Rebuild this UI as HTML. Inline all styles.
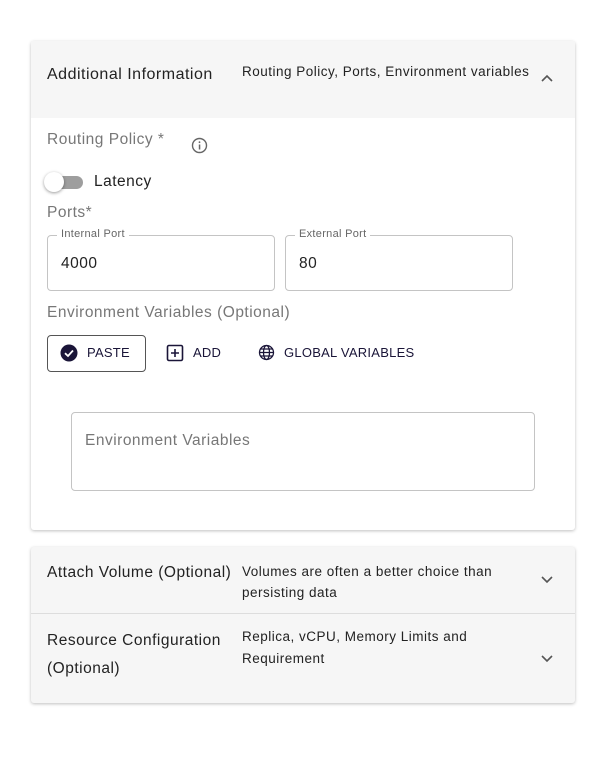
<!DOCTYPE html>
<html><head><style>
body{margin:0;width:604px;height:763px;background:#fff;font-family:"Liberation Sans",sans-serif;position:relative;overflow:hidden;letter-spacing:0.5px}
.a{position:absolute;white-space:nowrap}
.card{position:absolute;left:31px;width:544px;background:#fff;box-shadow:0 1px 3px rgba(0,0,0,.25);border-radius:3px}
.g{color:#777}
.fld{position:absolute;border:1px solid #c4c4c4;border-radius:4px}
.leg{position:absolute;top:-8px;left:9px;background:#fff;padding:0 4px;font-size:11px;color:#666;letter-spacing:0.3px}
.btn{font-size:13px;color:#1a1538;letter-spacing:0.25px}
</style></head><body>
<div class="card" style="top:41px;height:489px">
 <div style="position:absolute;left:0;top:0;width:544px;height:77px;background:#f6f6f6"></div>
</div>
<div class="a" style="left:47px;top:66px;font-size:16px;color:#222">Additional Information</div>
<div class="a" style="left:242px;top:64px;font-size:13.5px;color:#222">Routing Policy, Ports, Environment variables</div>
<svg class="a" style="left:540px;top:73px" width="14" height="10" viewBox="0 0 14 10"><path d="M2 8 L7 3 L12 8" fill="none" stroke="#555" stroke-width="1.6"/></svg>
<div class="a g" style="left:47px;top:131px;font-size:15.5px">Routing Policy *</div>
<svg class="a" style="left:191px;top:137px" width="17" height="17" viewBox="0 0 17 17"><circle cx="8.5" cy="8.5" r="7" fill="none" stroke="#666" stroke-width="1.4"/><rect x="7.8" y="7.5" width="1.5" height="5" fill="#666"/><circle cx="8.5" cy="5.2" r="0.9" fill="#666"/></svg>
<div class="a" style="left:50px;top:176px;width:33px;height:13px;border-radius:7px;background:#9e9e9e"></div>
<div class="a" style="left:44px;top:172px;width:20px;height:20px;border-radius:50%;background:#fff;box-shadow:0 1px 3px rgba(0,0,0,.4)"></div>
<div class="a" style="left:94px;top:173px;font-size:15.5px;color:#222">Latency</div>
<div class="a g" style="left:47px;top:204px;font-size:15.5px">Ports*</div>
<div class="fld" style="left:47px;top:235px;width:226px;height:54px"><span class="leg">Internal Port</span><span class="a" style="left:13px;top:19px;font-size:15.5px;color:#222">4000</span></div>
<div class="fld" style="left:285px;top:235px;width:226px;height:54px"><span class="leg">External Port</span><span class="a" style="left:13px;top:19px;font-size:15.5px;color:#222">80</span></div>
<div class="a g" style="left:47px;top:304px;font-size:15.5px">Environment Variables (Optional)</div>
<div class="a" style="left:47px;top:335px;width:97px;height:35px;border:1px solid #555;border-radius:4px"></div>
<svg class="a" style="left:60px;top:344px" width="18" height="18" viewBox="0 0 18 18"><circle cx="9" cy="9" r="8.5" fill="#1a1538"/><path d="M5 9.2 L8 12 L13 6.5" fill="none" stroke="#fff" stroke-width="1.8"/></svg>
<div class="a btn" style="left:87px;top:345px">PASTE</div>
<svg class="a" style="left:166px;top:344px" width="18" height="18" viewBox="0 0 18 18"><rect x="1.5" y="1.5" width="15" height="15" rx="1.5" fill="none" stroke="#1a1538" stroke-width="1.6"/><path d="M9 5v8M5 9h8" stroke="#1a1538" stroke-width="1.6"/></svg>
<div class="a btn" style="left:193px;top:345px">ADD</div>
<svg class="a" style="left:258px;top:344px" width="17" height="17" viewBox="0 0 17 17" fill="none" stroke="#1a1538" stroke-width="1.3"><circle cx="8.5" cy="8.5" r="7"/><ellipse cx="8.5" cy="8.5" rx="3" ry="7"/><path d="M1.5 8.5h14M2.5 5h12M2.5 12h12"/></svg>
<div class="a btn" style="left:284px;top:345px">GLOBAL VARIABLES</div>
<div class="fld" style="left:71px;top:412px;width:462px;height:77px"><span class="a g" style="left:13px;top:19px;font-size:15.5px">Environment Variables</span></div>
<div class="card" style="top:547px;height:156px;background:#f6f6f6">
 <div style="position:absolute;left:0;top:66px;width:544px;height:1px;background:#ddd"></div>
</div>
<div class="a" style="left:47px;top:564px;font-size:15.5px;color:#222">Attach Volume (Optional)</div>
<div class="a" style="left:242px;top:561px;font-size:13.5px;color:#222;line-height:21px">Volumes are often a better choice than<br>persisting data</div>
<svg class="a" style="left:540px;top:575px" width="14" height="10" viewBox="0 0 14 10"><path d="M2 2 L7 7 L12 2" fill="none" stroke="#555" stroke-width="1.6"/></svg>
<div class="a" style="left:47px;top:627px;font-size:15.5px;color:#222;line-height:28px">Resource Configuration<br>(Optional)</div>
<div class="a" style="left:242px;top:626px;font-size:13.5px;color:#222;line-height:22px">Replica, vCPU, Memory Limits and<br>Requirement</div>
<svg class="a" style="left:540px;top:654px" width="14" height="10" viewBox="0 0 14 10"><path d="M2 2 L7 7 L12 2" fill="none" stroke="#555" stroke-width="1.6"/></svg>
</body></html>
